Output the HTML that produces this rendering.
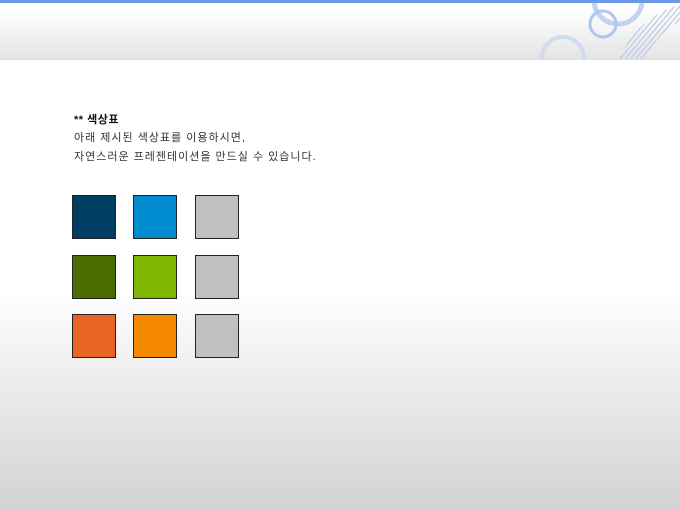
<!DOCTYPE html><html><head><meta charset="utf-8"><style>
body{margin:0;width:680px;height:510px;overflow:hidden;position:relative;font-family:"Liberation Sans","Noto Sans CJK KR",sans-serif;background:linear-gradient(#fff 0,#fff 290px,#d2d2d2 510px)}
.hd{position:absolute;left:0;top:0;width:680px;height:59px;background:linear-gradient(#fff 10px,#e4e4e4 59px);overflow:hidden;border-bottom:1px solid #ddd}
.bar{position:absolute;left:0;top:0;width:680px;height:3px;background:#6b9be8}
.t{position:absolute;left:74px;font-size:11px;letter-spacing:1px;color:#333;white-space:nowrap}
.s{position:absolute;width:42px;height:42px;border:1px solid #222}
</style></head><body>
<div class="hd">
<svg width="680" height="59" style="position:absolute;left:0;top:0">
<defs><pattern id="p" width="4" height="4" patternUnits="userSpaceOnUse" patternTransform="rotate(40)"><rect width="1.5" height="4" fill="#c3cfe8"/></pattern></defs>
<path d="M680 5 Q640 15 618 59 L645 59 Q660 30 680 22Z" fill="url(#p)"/>
<circle cx="618" cy="0" r="24" fill="none" stroke="#c3d4f2" stroke-width="5"/>
<circle cx="603" cy="24" r="13" fill="none" stroke="#b0c6ee" stroke-width="3"/>
<circle cx="563" cy="58" r="21" fill="none" stroke="#d0dbef" stroke-width="4"/>
</svg>
<div class="bar"></div></div>
<div class="t" style="top:111px;font-weight:bold;color:#111;letter-spacing:0.5px">** 색상표</div>
<div class="t" style="top:129px">아래 제시된 색상표를 이용하시면,</div>
<div class="t" style="top:148px">자연스러운 프레젠테이션을 만드실 수 있습니다.</div>
<div class="s" style="left:72px;top:195px;background:#003f63"></div>
<div class="s" style="left:133px;top:195px;background:#008bd0"></div>
<div class="s" style="left:195px;top:195px;background:#c0c0c0"></div>
<div class="s" style="left:72px;top:255px;background:#4a6d00"></div>
<div class="s" style="left:133px;top:255px;background:#80b600"></div>
<div class="s" style="left:195px;top:255px;background:#c0c0c0"></div>
<div class="s" style="left:72px;top:314px;background:#e86521"></div>
<div class="s" style="left:133px;top:314px;background:#f58a00"></div>
<div class="s" style="left:195px;top:314px;background:#c0c0c0"></div>
</body></html>
